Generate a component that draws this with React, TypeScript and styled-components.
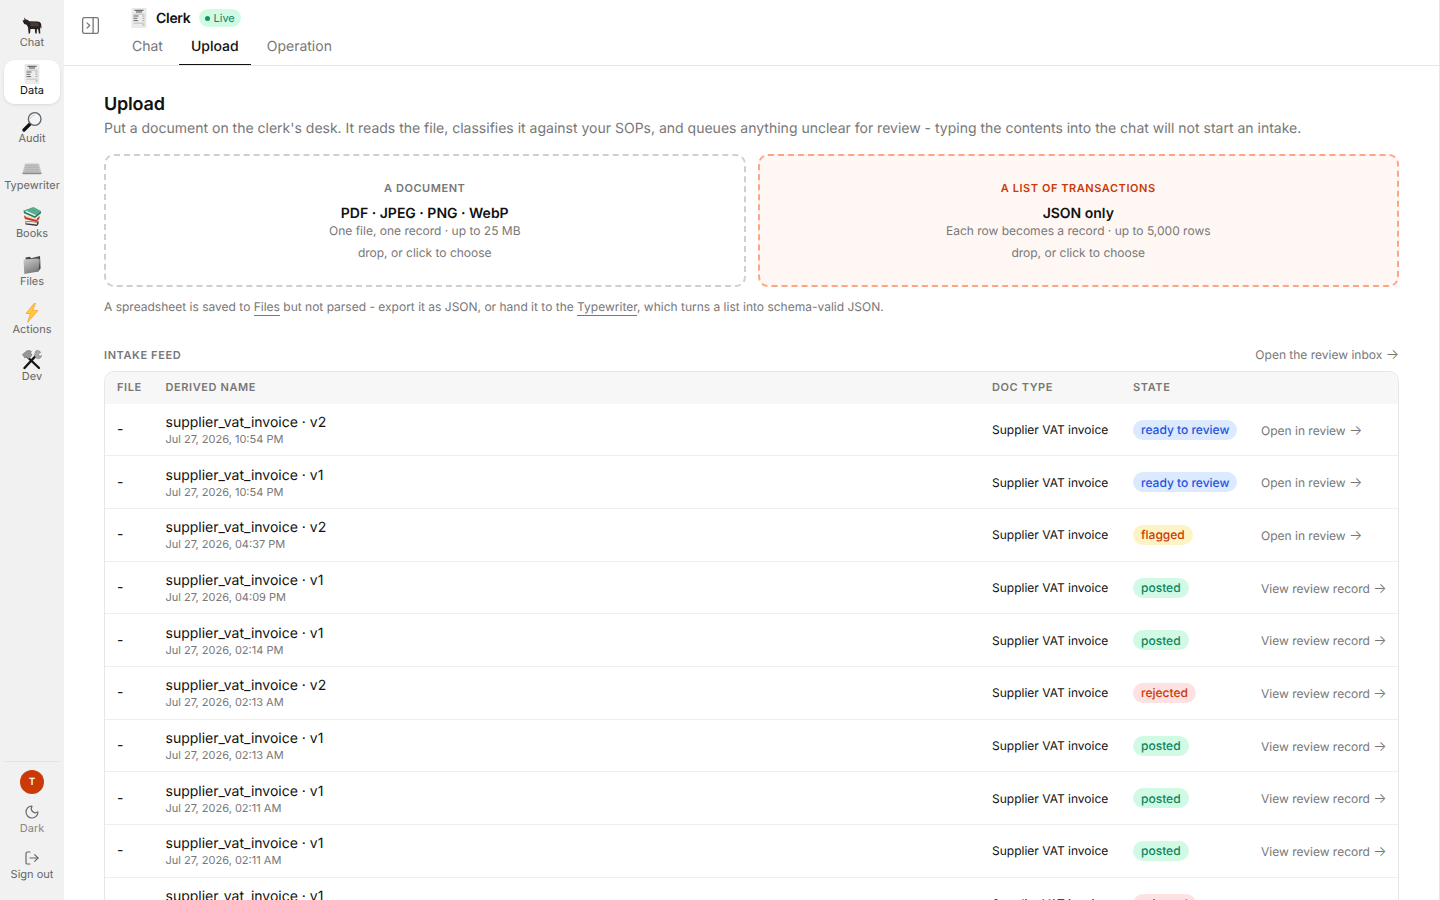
import React from 'react';
import styled, { createGlobalStyle } from 'styled-components';
import { LogOut, Moon, PanelRightClose } from 'lucide-react';

type PillKind = 'review' | 'flagged' | 'posted' | 'rejected';

type FeedRow = {
  name: string
  date: string
  state: PillKind
}

const pillLabels: Record<PillKind, string> = {
  review: 'ready to review',
  flagged: 'flagged',
  posted: 'posted',
  rejected: 'rejected',
};

const pillColors: Record<PillKind, { bg: string; fg: string }> = {
  review: { bg: '#dbeafe', fg: '#1f52e0' },
  flagged: { bg: '#fef3c7', fg: '#c93a06' },
  posted: { bg: '#d1fae5', fg: '#0b8560' },
  rejected: { bg: '#fee2e2', fg: '#c93a06' },
};

const rows: FeedRow[] = [
  { name: 'supplier_vat_invoice · v2', date: 'Jul 27, 2026, 10:54 PM', state: 'review' },
  { name: 'supplier_vat_invoice · v1', date: 'Jul 27, 2026, 10:54 PM', state: 'review' },
  { name: 'supplier_vat_invoice · v2', date: 'Jul 27, 2026, 04:37 PM', state: 'flagged' },
  { name: 'supplier_vat_invoice · v1', date: 'Jul 27, 2026, 04:09 PM', state: 'posted' },
  { name: 'supplier_vat_invoice · v1', date: 'Jul 27, 2026, 02:14 PM', state: 'posted' },
  { name: 'supplier_vat_invoice · v2', date: 'Jul 27, 2026, 02:13 AM', state: 'rejected' },
  { name: 'supplier_vat_invoice · v1', date: 'Jul 27, 2026, 02:13 AM', state: 'posted' },
  { name: 'supplier_vat_invoice · v1', date: 'Jul 27, 2026, 02:11 AM', state: 'posted' },
  { name: 'supplier_vat_invoice · v1', date: 'Jul 27, 2026, 02:11 AM', state: 'posted' },
  { name: 'supplier_vat_invoice · v1', date: 'Jul 27, 2026, 02:10 AM', state: 'rejected' },
];

const OxIcon = () => (
  <svg width="20" height="20" viewBox="0 0 20 20">
    <path d="M.5 4.500 2.500 4l-.5-2.500L3.800 3.500l2.200.4 1 1.300 8.500.3c2 .1 3.500 1 3.700 3l.3 3.500-.6.500-.2-2-.6 2.200.2 4.800h-1.400l-.6-3.800-1.300-1-.3 4.800h-1.400l-.5-4.500H8.500l-.5 4.500H6.600L6 11.300 4.600 8.800l-2.400-.7z" fill="#27211f" />
    <path d="M8 6.500c2.500-.5 6-.5 8.500.3l.6 3.500-8 .1z" fill="#453a35" />
  </svg>
);

const ReceiptIcon = () => (
  <svg width="18" height="20" viewBox="0 0 18 20">
    <path d="M2 0.500h14V19.500H2z" fill="#ececea" stroke="#dadad8" strokeWidth=".5" />
    <path d="M4.500 2.300h9M6 4h6" stroke="#4a4d52" strokeWidth="1" />
    <path d="M3.500 6.200h11M3.500 15.200h11" stroke="#a5a5a5" strokeWidth=".6" />
    <path d="M3.500 8h5M3.500 10.300h3.800M3.500 12.600h4.600" stroke="#63666a" strokeWidth="1" />
    <path d="M12.500 8h2M12.500 10.300h2M12.500 12.600h2M12.500 17h2" stroke="#8f9194" strokeWidth=".8" />
  </svg>
);

const LensIcon = () => (
  <svg width="20" height="20" viewBox="0 0 20 20">
    <path d="M8.500 11.500 2 18" stroke="#111" strokeWidth="3.200" strokeLinecap="round" />
    <circle cx="12.700" cy="7" r="6.300" fill="#f3f5f6" stroke="#5f6468" strokeWidth="1.300" />
    <path d="M8.600 6.500c.5-2 2.200-3.300 4-3.400" stroke="#c9ced1" strokeWidth="1" fill="none" />
  </svg>
);

const KeysIcon = () => (
  <svg width="20" height="20" viewBox="0 0 20 20">
    <path d="M3 4.500h14L19.500 13.500H.5z" fill="#c9c9c9" />
    <path d="M.5 13.500h19V15.200H.5z" fill="#8a8a8a" />
    <path d="M4 6.300h12M3.500 8.300h13M3 10.300h14M2.500 12.200h15" stroke="#a2a2a2" strokeWidth="1" strokeDasharray="1.200 .5" />
  </svg>
);

const BooksIcon = () => (
  <svg width="20" height="20" viewBox="0 0 20 20">
    <path d="M3.500 14 15 15l1.500-1.500V17L15 19 3.500 17.500z" fill="#3f3936" />
    <path d="M3.500 14.500 15 15.500v2L4 16.200z" fill="#efe8dc" />
    <path d="M2 8.500 14.500 12l3-3.200v2.700L14.500 15 2.800 12z" fill="#c63c1b" />
    <path d="M3.500 10 14.500 13l.2-1.300L4 8.800z" fill="#f0e6d6" />
    <path d="M1.500 3.500 11.500 0l7.500 4-6 4.700z" fill="#58ab8c" />
    <path d="M1.500 3.500 13 8.700l6-4.700v2.300L13 11 2 6.300z" fill="#277a60" />
    <path d="M3 4.800l10 4.400.8-1.200-9.600-4.200z" fill="#e9f0e6" />
  </svg>
);

const FolderIcon = () => (
  <svg width="20" height="20" viewBox="0 0 20 20">
    <defs>
      <linearGradient id="folderFace" x1="0" y1="0" x2="0.5" y2="1">
        <stop offset="0" stopColor="#cfcfcf" />
        <stop offset="1" stopColor="#7b7b7b" />
      </linearGradient>
    </defs>
    <path d="M3.500 2.500 8 1.800l1 1.500 9-2.300.6 12.500-2.500 3H5z" fill="#454545" />
    <path d="M1.500 4.500l13.500-1c1.800 0 2.800.7 2.700 2.500l-1.200 10.500L2.300 19z" fill="url(#folderFace)" />
  </svg>
);

const BoltIcon = () => (
  <svg width="20" height="20" viewBox="0 0 20 20">
    <path d="M12 .5h1.500L10.500 7.500h5.500L5.500 19.500l3-9H4z" fill="#ffc83d" stroke="#f59e2c" strokeWidth=".7" strokeLinejoin="round" />
  </svg>
);

const ToolsIcon = () => (
  <svg width="20" height="20" viewBox="0 0 20 20">
    <path d="M2.500 18 14.500 5" stroke="#161616" strokeWidth="2.400" strokeLinecap="round" />
    <path d="M14 .8c1.900-.6 4 .2 4.800 1.700L16.500 3.600l.3 1.900 1.800.6 1-.9c0 2.300-2.200 4-4.500 3.200-2-.7-3-2.800-2.300-4.800z" fill="#a8abad" stroke="#6c6f72" strokeWidth=".5" />
    <path d="M5.500 7 17 18" stroke="#161616" strokeWidth="2.400" strokeLinecap="round" />
    <path d="M.5 4.500 5 .8c1.800-.6 3.500-.2 4.600 1l-1.300.5L10 5 6.700 9 4.300 7 2.800 8z" fill="#94979a" stroke="#5e6164" strokeWidth=".5" />
  </svg>
);

const navItems = [
  { label: 'Chat', icon: <OxIcon /> },
  { label: 'Data', icon: <ReceiptIcon />, active: true },
  { label: 'Audit', icon: <LensIcon /> },
  { label: 'Typewriter', icon: <KeysIcon /> },
  { label: 'Books', icon: <BooksIcon /> },
  { label: 'Files', icon: <FolderIcon /> },
  { label: 'Actions', icon: <BoltIcon /> },
  { label: 'Dev', icon: <ToolsIcon /> },
];

const App = () => {
  return (
    <>
      <GlobalStyle />
      <Shell>
        <Sidebar>
          <NavList>
            {navItems.map((item) => (
              <NavItem key={item.label} $active={item.active}>
                <NavIcon>{item.icon}</NavIcon>
                <NavLabel>{item.label}</NavLabel>
              </NavItem>
            ))}
          </NavList>
          <SideFooter>
            <Avatar>T</Avatar>
            <FooterButton $muted>
              <Moon size={16} strokeWidth={1.75} />
              <span>Dark</span>
            </FooterButton>
            <FooterButton>
              <LogOut size={16} strokeWidth={1.75} />
              <span>Sign out</span>
            </FooterButton>
          </SideFooter>
        </Sidebar>

        <Main>
          <Header>
            <ToggleButton>
              <PanelRightClose size={21} strokeWidth={1.5} />
            </ToggleButton>
            <HeaderBody>
              <TitleRow>
                <ReceiptIcon />
                <AgentName>Clerk</AgentName>
                <LivePill><LiveDot />Live</LivePill>
              </TitleRow>
              <Tabs>
                <Tab>Chat</Tab>
                <Tab $active>Upload</Tab>
                <Tab>Operation</Tab>
              </Tabs>
            </HeaderBody>
          </Header>

          <Content>
            <PageTitle>Upload</PageTitle>
            <PageIntro>
              Put a document on the clerk's desk. It reads the file, classifies it against your SOPs, and queues anything unclear for review - typing the contents into the chat will not start an intake.
            </PageIntro>

            <DropGrid>
              <DropCard>
                <DropKicker>A document</DropKicker>
                <DropTitle>PDF · JPEG · PNG · WebP</DropTitle>
                <DropText>One file, one record · up to 25 MB</DropText>
                <DropHint>drop, or click to choose</DropHint>
              </DropCard>
              <DropCard $accent>
                <DropKicker $accent>A list of transactions</DropKicker>
                <DropTitle>JSON only</DropTitle>
                <DropText>Each row becomes a record · up to 5,000 rows</DropText>
                <DropHint>drop, or click to choose</DropHint>
              </DropCard>
            </DropGrid>

            <Note>
              A spreadsheet is saved to <NoteLink>Files</NoteLink> but not parsed - export it as JSON, or hand it to the <NoteLink>Typewriter</NoteLink>, which turns a list into schema-valid JSON.
            </Note>

            <FeedHeader>
              <FeedTitle>Intake feed</FeedTitle>
              <InboxLink>Open the review inbox <Arrow>→</Arrow></InboxLink>
            </FeedHeader>

            <TableCard>
              <HeadRow>
                <HeadCell>File</HeadCell>
                <HeadCell>Derived name</HeadCell>
                <HeadCell>Doc type</HeadCell>
                <HeadCell>State</HeadCell>
                <HeadCell />
              </HeadRow>
              {rows.map((row, i) => (
                <BodyRow key={i}>
                  <Dash>-</Dash>
                  <NameCell>
                    <RowName>{row.name}</RowName>
                    <RowDate>{row.date}</RowDate>
                  </NameCell>
                  <DocType>Supplier VAT invoice</DocType>
                  <PillCell><Pill $kind={row.state}>{pillLabels[row.state]}</Pill></PillCell>
                  <RowLink>
                    {row.state === 'review' || row.state === 'flagged' ? 'Open in review ' : 'View review record '}
                    <Arrow>→</Arrow>
                  </RowLink>
                </BodyRow>
              ))}
            </TableCard>
          </Content>
        </Main>
      </Shell>
    </>
  );
};

export default App;

const GlobalStyle = createGlobalStyle`
  html, body {
    margin: 0;
    height: 100%;
    overflow: hidden;
    background: #fff;
  }

  body {
    font-family: Inter, "Liberation Sans", sans-serif;
    color: #111;
    text-rendering: geometricPrecision;
  }

  * {
    box-sizing: border-box;
  }
`

const Shell = styled.div`
  display: flex;
  height: 100vh;
  overflow: hidden;
`

const Sidebar = styled.aside`
  width: 64px;
  flex-shrink: 0;
  background: #f1f1f1;
  display: flex;
  flex-direction: column;
  padding: 12px 4px 0;
`

const NavList = styled.nav`
  display: flex;
  flex-direction: column;
  gap: 3.75px;
`

const NavItem = styled.div<{ $active?: boolean }>`
  height: 44px;
  padding-top: 4px;
  display: flex;
  flex-direction: column;
  align-items: center;
  border-radius: 10px;
  background: ${(p) => (p.$active ? '#fff' : 'transparent')};
  box-shadow: ${(p) => (p.$active ? '0 1px 3px rgba(0, 0, 0, 0.1)' : 'none')};
  color: ${(p) => (p.$active ? '#111' : '#666')};
`

const NavIcon = styled.div`
  height: 20px;
  display: flex;
  align-items: center;
  justify-content: center;
`

const NavLabel = styled.span`
  font-size: 11px;
  line-height: 13px;
  white-space: nowrap;
`

const SideFooter = styled.div`
  margin-top: auto;
  border-top: 1px solid #e4e4e4;
  padding: 8px 0 20px;
  display: flex;
  flex-direction: column;
  align-items: center;
`

const Avatar = styled.div`
  width: 24px;
  height: 24px;
  border-radius: 50%;
  background: #c93a06;
  color: #fff;
  font-size: 10px;
  font-weight: 600;
  display: flex;
  align-items: center;
  justify-content: center;
`

const FooterButton = styled.div<{ $muted?: boolean }>`
  margin-top: ${(p) => (p.$muted ? '10px' : '16px')};
  display: flex;
  flex-direction: column;
  align-items: center;
  gap: 2px;
  font-size: 11px;
  line-height: 12px;
  color: ${(p) => (p.$muted ? '#888' : '#666')};
  white-space: nowrap;

  svg {
    color: #666;
  }
`

const Main = styled.main`
  flex: 1;
  min-width: 0;
  display: flex;
  flex-direction: column;
  border-right: 1px solid #e6e6e6;
  overflow: hidden;
`

const Header = styled.header`
  height: 66px;
  flex-shrink: 0;
  display: flex;
  border-bottom: 1px solid #e6e6e6;
`

const ToggleButton = styled.div`
  width: 56px;
  padding: 15px 0 0 15.5px;
  color: #777;
  flex-shrink: 0;
`

const HeaderBody = styled.div`
  display: flex;
  flex-direction: column;
`

const TitleRow = styled.div`
  display: flex;
  align-items: center;
  height: 18px;
  margin-top: 9px;
  padding-left: 10px;
`

const AgentName = styled.span`
  margin-left: 8px;
  font-size: 14px;
  font-weight: 600;
  letter-spacing: -0.3px;
`

const LivePill = styled.span`
  margin-left: 8px;
  height: 18px;
  padding: 0 6px;
  border-radius: 9px;
  background: #d1fae5;
  color: #0b8560;
  font-size: 11px;
  display: inline-flex;
  align-items: center;
  gap: 4px;
`

const LiveDot = styled.i`
  width: 5px;
  height: 5px;
  border-radius: 50%;
  background: #10946b;
`

const Tabs = styled.div`
  display: flex;
  gap: 4px;
  margin-top: 1px;
`

const Tab = styled.div<{ $active?: boolean }>`
  height: 37px;
  padding: 9px 12px 0;
  font-size: 14px;
  line-height: 20px;
  font-weight: ${(p) => (p.$active ? 500 : 400)};
  color: ${(p) => (p.$active ? '#111' : '#777')};
  border-bottom: 1px solid ${(p) => (p.$active ? '#111' : 'transparent')};
`

const Content = styled.div`
  flex: 1;
  padding: 27px 40px 0;
  overflow: hidden;
`

const PageTitle = styled.h1`
  margin: 0;
  font-size: 18px;
  line-height: 24px;
  font-weight: 600;
  letter-spacing: -0.2px;
`

const PageIntro = styled.p`
  margin: 1px 0 0;
  font-size: 14px;
  line-height: 22px;
  color: #777;
`

const DropGrid = styled.div`
  display: grid;
  grid-template-columns: 1fr 1fr;
  gap: 12px;
  margin-top: 14px;
`

const DropCard = styled.div<{ $accent?: boolean }>`
  height: 133px;
  padding-top: 25px;
  border: 2px dashed ${(p) => (p.$accent ? '#ffa583' : '#cfcfcf')};
  border-radius: 10px;
  background: ${(p) => (p.$accent ? '#fff7f4' : '#fff')};
  text-align: center;
`

const DropKicker = styled.div<{ $accent?: boolean }>`
  font-size: 11px;
  line-height: 14px;
  font-weight: 600;
  letter-spacing: 0.55px;
  text-transform: uppercase;
  color: ${(p) => (p.$accent ? '#c93a06' : '#777')};
`

const DropTitle = styled.div`
  margin-top: 10px;
  font-size: 14px;
  line-height: 17px;
  font-weight: 600;
`

const DropText = styled.div`
  font-size: 12px;
  line-height: 18px;
  color: #777;
`

const DropHint = styled.div`
  margin-top: 4px;
  font-size: 12px;
  line-height: 18px;
  color: #777;
`

const Note = styled.p`
  margin: 11px 0 0;
  font-size: 12px;
  line-height: 18px;
  color: #777;
`

const NoteLink = styled.span`
  border-bottom: 1px solid #777;
  padding-bottom: 1px;
`

const FeedHeader = styled.div`
  display: flex;
  justify-content: space-between;
  align-items: center;
  margin-top: 30px;
  height: 18px;
`

const FeedTitle = styled.h2`
  margin: 0;
  font-size: 11px;
  font-weight: 600;
  letter-spacing: 0.6px;
  text-transform: uppercase;
  color: #777;
`

const InboxLink = styled.span`
  font-size: 12px;
  color: #777;
  padding-bottom: 2px;
`

const Arrow = styled.span`
  font-size: 14px;
  font-weight: 300;
  line-height: 0;
`

const TableCard = styled.div`
  margin-top: 7px;
  border: 1px solid #e6e6e6;
  border-bottom: 0;
  border-radius: 10px 10px 0 0;
  overflow: hidden;
`

const HeadRow = styled.div`
  display: grid;
  grid-template-columns: 48.5px 826.5px 141px 128px 1fr;
  align-items: center;
  height: 31.6px;
  padding-bottom: 2px;
  background: #f7f7f7;
`

const HeadCell = styled.div`
  padding-left: 12px;
  font-size: 11px;
  font-weight: 600;
  letter-spacing: 0.6px;
  text-transform: uppercase;
  color: #777;
`

const BodyRow = styled.div`
  display: grid;
  grid-template-columns: 48.5px 826.5px 141px 128px 1fr;
  align-items: center;
  height: 52.67px;
  border-bottom: 1px solid #efefef;

  & > * {
    padding-left: 12px;
  }
`

const Dash = styled.div`
  font-size: 14px;
`

const NameCell = styled.div`
  display: flex;
  flex-direction: column;
  padding-top: 2px;
`

const RowName = styled.span`
  font-size: 14px;
  line-height: 18px;
`

const RowDate = styled.span`
  font-size: 11px;
  line-height: 15px;
  color: #777;
`

const DocType = styled.div`
  font-size: 12px;
`

const PillCell = styled.div`
  padding-bottom: 1px;
`

const Pill = styled.span<{ $kind: PillKind }>`
  display: inline-flex;
  align-items: center;
  height: 20px;
  padding: 0 8px;
  border-radius: 10px;
  font-size: 12px;
  font-weight: 500;
  background: ${(p) => pillColors[p.$kind].bg};
  color: ${(p) => pillColors[p.$kind].fg};
`

const RowLink = styled.div`
  font-size: 12px;
  color: #777;
  white-space: nowrap;
  padding-top: 1.5px;
`
